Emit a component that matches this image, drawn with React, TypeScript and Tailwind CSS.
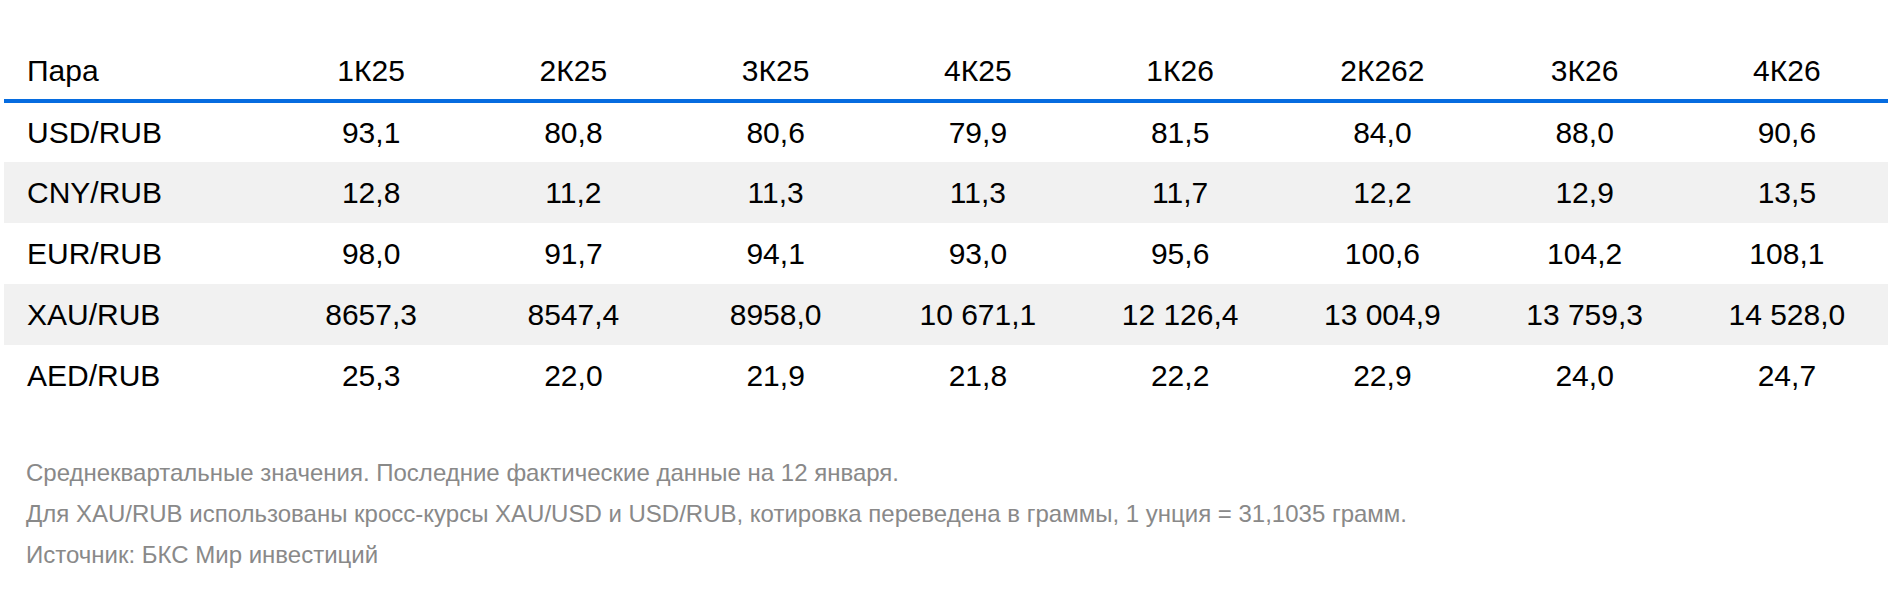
const headers = ['1К25', '2К25', '3К25', '4К25', '1К26', '2К262', '3К26', '4К26'];

const rows: { pair: string; values: string[] }[] = [
  { pair: 'USD/RUB', values: ['93,1', '80,8', '80,6', '79,9', '81,5', '84,0', '88,0', '90,6'] },
  { pair: 'CNY/RUB', values: ['12,8', '11,2', '11,3', '11,3', '11,7', '12,2', '12,9', '13,5'] },
  { pair: 'EUR/RUB', values: ['98,0', '91,7', '94,1', '93,0', '95,6', '100,6', '104,2', '108,1'] },
  {
    pair: 'XAU/RUB',
    values: ['8657,3', '8547,4', '8958,0', '10\u00a0671,1', '12\u00a0126,4', '13\u00a0004,9', '13\u00a0759,3', '14\u00a0528,0'],
  },
  { pair: 'AED/RUB', values: ['25,3', '22,0', '21,9', '21,8', '22,2', '22,9', '24,0', '24,7'] },
];

const notes = [
  'Среднеквартальные значения. Последние фактические данные на 12 января.',
  'Для XAU/RUB использованы кросс-курсы XAU/USD и USD/RUB, котировка переведена в граммы, 1 унция = 31,1035 грамм.',
  'Источник: БКС Мир инвестиций',
];

export default function App() {
  return (
    <main className="min-h-screen w-full bg-white font-['Liberation_Sans',Arial,sans-serif] text-black">
      <div className="px-[4px] pt-[41px]">
        {/* Forecast table */}
        <table className="w-full table-fixed border-collapse text-[30px]">
          <colgroup>
            <col className="w-[266px]" />
            {headers.map((h) => (
              <col key={h} />
            ))}
          </colgroup>
          <thead>
            <tr className="h-[60px] border-b-[4px] border-[#066ce0]">
              <th className="pl-[23px] text-left font-normal">Пара</th>
              {headers.map((h) => (
                <th key={h} className="text-center font-normal">
                  {h}
                </th>
              ))}
            </tr>
          </thead>
          <tbody>
            {rows.map((r, i) => (
              <tr key={r.pair} className={`h-[61px] ${i % 2 === 1 ? 'bg-[#f1f1f1]' : 'bg-white'}`}>
                <td className="pl-[23px] text-left">{r.pair}</td>
                {r.values.map((v, j) => (
                  <td key={j} className="text-center">
                    {v}
                  </td>
                ))}
              </tr>
            ))}
          </tbody>
        </table>
      </div>

      {/* Notes */}
      <div className="mt-[46px] pl-[26px] text-[24px] leading-[41px] text-[#898989]">
        {notes.map((n) => (
          <p key={n}>{n}</p>
        ))}
      </div>
    </main>
  );
}
